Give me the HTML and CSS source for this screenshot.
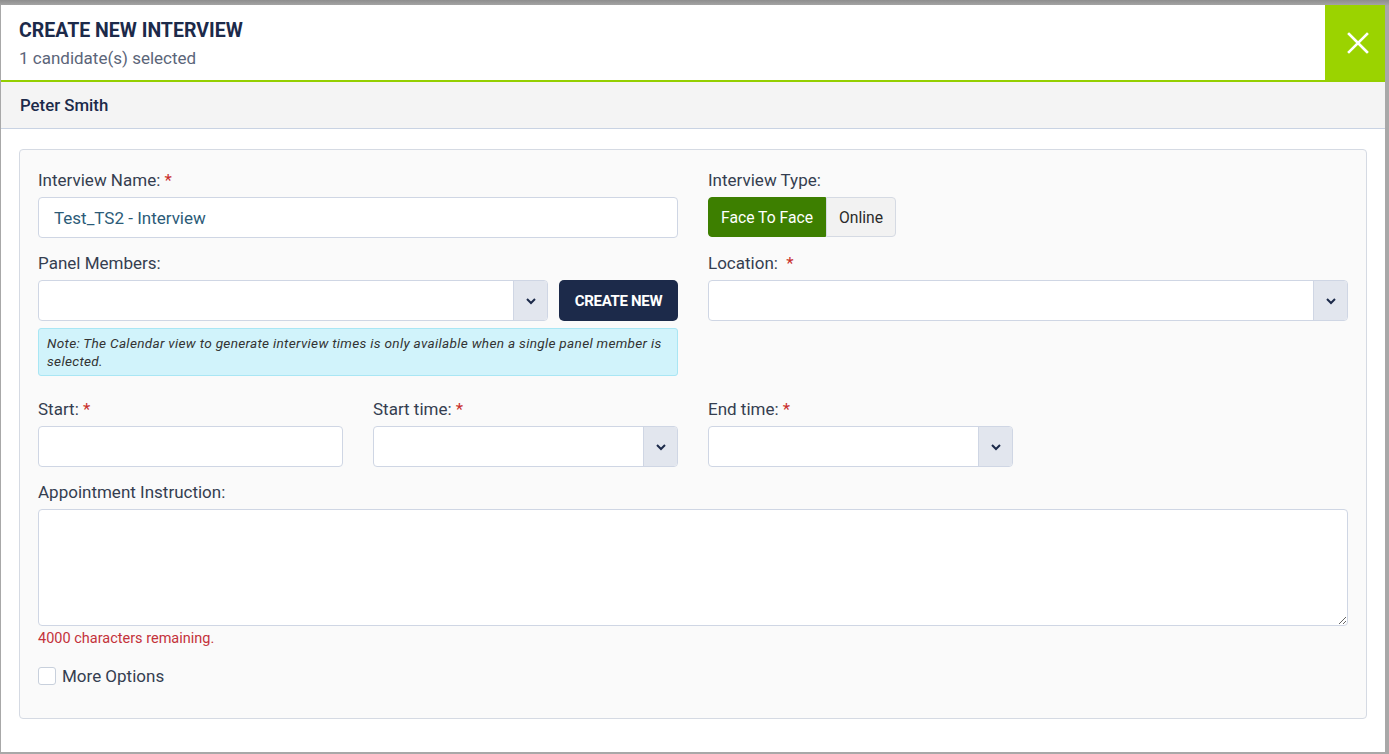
FILE: index.html
```html
<!DOCTYPE html>
<html lang="en">
<head>
    <meta charset="UTF-8">
    <meta name="viewport" content="width=device-width, initial-scale=1.0">
    <title>Create New Interview</title>
    <link rel="stylesheet" href="styles.css">
</head>
<body>
    <div class="modal">
        <div class="modal-header">
            <div class="header-text">
                <h1>CREATE NEW INTERVIEW</h1>
                <div class="subtitle">1 candidate(s) selected</div>
            </div>
            <button class="close-btn" type="button" aria-label="Close">
                <svg width="22" height="22" viewBox="0 0 22 22">
                    <path d="M2 2 L20 20 M20 2 L2 20" stroke="#fff" stroke-width="2.6" stroke-linecap="square" fill="none"/>
                </svg>
            </button>
        </div>

        <div class="candidate-bar">Peter Smith</div>

        <form class="form-box">
            <div class="form-row">
                <div class="form-group span-2">
                    <label for="interviewName">Interview Name: <span class="req">*</span></label>
                    <input type="text" id="interviewName" class="text-input" value="Test_TS2 - Interview">
                </div>
                <div class="form-group span-2">
                    <label>Interview Type:</label>
                    <div class="toggle-group">
                        <button type="button" class="toggle active">Face To Face</button>
                        <button type="button" class="toggle">Online</button>
                    </div>
                </div>
            </div>

            <div class="form-row">
                <div class="form-group span-2">
                    <label>Panel Members:</label>
                    <div class="panel-line">
                        <div class="select-box">
                            <span class="select-value"></span>
                            <span class="select-arrow">
                                <svg width="12" height="8" viewBox="0 0 12 8"><path d="M2 2 L6 6 L10 2" stroke="#1c2a4a" stroke-width="2" fill="none"/></svg>
                            </span>
                        </div>
                        <button type="button" class="create-btn">CREATE NEW</button>
                    </div>
                    <div class="note">Note: The Calendar view to generate interview times is only available when a single panel member is selected.</div>
                </div>
                <div class="form-group span-2">
                    <label>Location: &nbsp;<span class="req">*</span></label>
                    <div class="select-box">
                        <span class="select-value"></span>
                        <span class="select-arrow">
                            <svg width="12" height="8" viewBox="0 0 12 8"><path d="M2 2 L6 6 L10 2" stroke="#1c2a4a" stroke-width="2" fill="none"/></svg>
                        </span>
                    </div>
                </div>
            </div>

            <div class="form-row row-times">
                <div class="form-group">
                    <label for="startDate">Start: <span class="req">*</span></label>
                    <input type="text" id="startDate" class="text-input">
                </div>
                <div class="form-group">
                    <label>Start time: <span class="req">*</span></label>
                    <div class="select-box">
                        <span class="select-value"></span>
                        <span class="select-arrow">
                            <svg width="12" height="8" viewBox="0 0 12 8"><path d="M2 2 L6 6 L10 2" stroke="#1c2a4a" stroke-width="2" fill="none"/></svg>
                        </span>
                    </div>
                </div>
                <div class="form-group">
                    <label>End time: <span class="req">*</span></label>
                    <div class="select-box">
                        <span class="select-value"></span>
                        <span class="select-arrow">
                            <svg width="12" height="8" viewBox="0 0 12 8"><path d="M2 2 L6 6 L10 2" stroke="#1c2a4a" stroke-width="2" fill="none"/></svg>
                        </span>
                    </div>
                </div>
            </div>

            <div class="form-row row-last">
                <div class="form-group span-4">
                    <label for="instruction">Appointment Instruction:</label>
                    <textarea id="instruction" class="textarea"></textarea>
                    <div class="char-count">4000 characters remaining.</div>
                </div>
            </div>

            <div class="check-row">
                <input type="checkbox" id="moreOptions">
                <label for="moreOptions">More Options</label>
            </div>
        </form>
    </div>
</body>
</html>
```

FILE: styles.css
```css
* {
    box-sizing: border-box;
}
body {
    margin: 0;
    padding: 5px 4px 2px 1px;
    background: linear-gradient(#8e8e8e, #a8a8a8 6px);
    font-family: Roboto, "Liberation Sans", Arial, sans-serif;
    height: 754px;
    overflow: hidden;
}
.modal {
    background: #fff;
    height: 747px;
}
.modal-header {
    display: flex;
    height: 77px;
    border-bottom: 2px solid #94cf00;
}
.header-text {
    flex: 1;
    padding: 14px 18px 0;
}
h1 {
    margin: 0 0 6px;
    font-size: 19.5px;
    line-height: 23px;
    font-weight: 700;
    color: #1c2a4a;
}
.subtitle {
    font-size: 17px;
    line-height: 21px;
    color: #5b6579;
}
.close-btn {
    width: 60px;
    border: none;
    background: #9bd300;
    display: flex;
    align-items: center;
    justify-content: center;
    padding: 0 0 0 5px;
    cursor: pointer;
}
.candidate-bar {
    height: 47px;
    display: flex;
    align-items: center;
    padding: 0 19px;
    background: #f4f4f4;
    border-bottom: 1px solid #c9d3e3;
    font-size: 16.8px;
    font-weight: 500;
    color: #1c2a4a;
}
.form-box {
    margin: 20px 18px 0;
    padding: 20px 18px 32px;
    background: #fafafa;
    border: 1px solid #d5dae3;
    border-radius: 4px;
}
.form-row {
    display: grid;
    grid-template-columns: repeat(4, 1fr);
    column-gap: 30px;
    margin-bottom: 15px;
}
.span-2 {
    grid-column: span 2;
}
.span-4 {
    grid-column: span 4;
}
.form-group label {
    display: block;
    font-size: 17px;
    line-height: 20px;
    margin-bottom: 7px;
    color: #353e50;
}
.req {
    color: #c9302c;
}
.text-input {
    display: block;
    width: 100%;
    height: 41px;
    border: 1px solid #cfd6e4;
    border-radius: 4px;
    background: #fff;
    padding: 0 15px;
    font-family: inherit;
    font-size: 17px;
    color: #2c5b78;
}
.toggle-group {
    display: flex;
}
.toggle {
    height: 40px;
    border: 1px solid #d5dae3;
    background: #f2f2f2;
    font-family: inherit;
    font-size: 15.7px;
    color: #2b2b2b;
    padding: 0 12px;
    border-radius: 0 4px 4px 0;
    cursor: pointer;
}
.toggle.active {
    width: 118px;
    background: #3d7f00;
    border-color: #3d7f00;
    color: #fff;
    border-radius: 4px 0 0 4px;
}
.panel-line {
    display: flex;
    gap: 11px;
}
.panel-line .select-box {
    flex: 1;
}
.select-box {
    display: flex;
    height: 41px;
    border: 1px solid #cfd6e4;
    border-radius: 4px;
    background: #fff;
    overflow: hidden;
}
.select-value {
    flex: 1;
}
.select-arrow {
    width: 34px;
    display: flex;
    align-items: center;
    justify-content: center;
    background: #e2e6ee;
    border-left: 1px solid #cfd6e4;
}
.create-btn {
    width: 119px;
    height: 41px;
    border: none;
    border-radius: 5px;
    background: #1c2a4a;
    color: #fff;
    font-family: inherit;
    font-size: 15px;
    font-weight: 700;
    letter-spacing: -0.3px;
    cursor: pointer;
}
.note {
    margin-top: 7px;
    padding: 5px 8px;
    background: #d1f3fb;
    border: 1px solid #a9e6f4;
    border-radius: 3px;
    font-size: 13.6px;
    line-height: 18px;
    font-style: italic;
    color: #333;
    letter-spacing: 0.3px;
}
.form-row.row-times {
    margin-top: 23px;
}
.form-row.row-last {
    margin-bottom: 0;
}
.textarea {
    display: block;
    width: 100%;
    height: 117px;
    border: 1px solid #cfd6e4;
    border-radius: 4px;
    background: #fff;
    font-family: inherit;
    resize: vertical;
}
.char-count {
    margin-top: 4px;
    font-size: 14.5px;
    line-height: 17px;
    color: #c4323a;
}
.check-row {
    display: flex;
    align-items: center;
    gap: 6px;
    margin-top: 19px;
}
.check-row input {
    appearance: none;
    width: 18px;
    height: 18px;
    margin: 0;
    border: 1px solid #c8d0dc;
    border-radius: 3px;
    background: #fff;
}
.check-row label {
    font-size: 17px;
    color: #353e50;
}
```
